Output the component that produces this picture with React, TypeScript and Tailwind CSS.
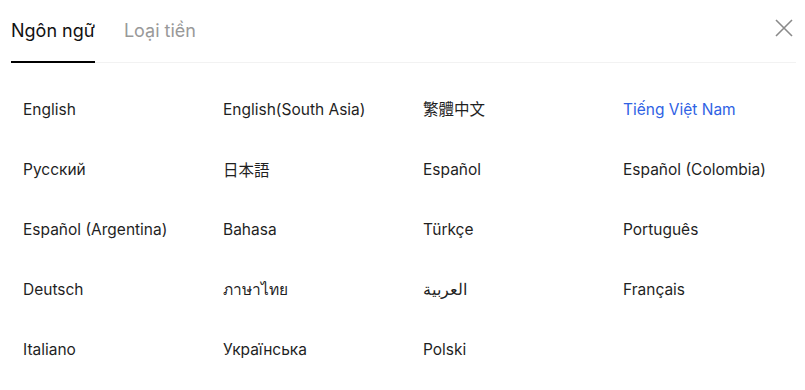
import React, { useState } from 'react';

const languages = [
  'English',
  'English(South Asia)',
  '繁體中文',
  'Tiếng Việt Nam',
  'Русский',
  '日本語',
  'Español',
  'Español (Colombia)',
  'Español (Argentina)',
  'Bahasa',
  'Türkçe',
  'Português',
  'Deutsch',
  'ภาษาไทย',
  'العربية',
  'Français',
  'Italiano',
  'Українська',
  'Polski',
];

const App: React.FC = () => {
  const [tab, setTab] = useState<'lang' | 'currency'>('lang');
  const [selected, setSelected] = useState('Tiếng Việt Nam');

  return (
    <div className="w-[805px] h-[390px] bg-white font-['Inter','Noto_Sans_CJK_TC','Noto_Sans',sans-serif] text-[#1f1f1f]">
      {/* Header tabs */}
      <div className="ml-[11px] mr-[9px] h-[63px] flex items-end justify-between border-b border-[#f2f2f2]">
        <div className="flex gap-[29px]">
          <button
            onClick={() => setTab('lang')}
            className={`-mb-px pb-[18px] text-[18px] leading-[24px] border-b-2 ${
              tab === 'lang' ? 'border-black text-[#111]' : 'border-transparent text-[#999]'
            }`}
          >
            Ngôn ngữ
          </button>
          <button
            onClick={() => setTab('currency')}
            className={`-mb-px pb-[18px] text-[18px] leading-[24px] border-b-2 ${
              tab === 'currency' ? 'border-black text-[#111]' : 'border-transparent text-[#999]'
            }`}
          >
            Loại tiền
          </button>
        </div>
        <button className="mb-[24px] mr-[2px] text-[#8a8a8a]">
          <svg width="20" height="20" viewBox="0 0 20 20" fill="none" stroke="currentColor" strokeWidth="1.6">
            <path d="M2 2L18 18M18 2L2 18" />
          </svg>
        </button>
      </div>

      {/* Language grid */}
      <div className="pl-[23px] pt-[17px] grid grid-cols-[200px_200px_200px_200px]">
        {languages.map((lang) => (
          <button
            key={lang}
            onClick={() => setSelected(lang)}
            className={`h-[60px] flex items-center text-left text-[15.5px] ${
              selected === lang ? 'text-[#2f62e4]' : 'text-[#1f1f1f]'
            }`}
          >
            {lang === '日本語' ? (
              <span className="font-['Noto_Sans_CJK_JP',sans-serif]">{lang}</span>
            ) : (
              lang
            )}
          </button>
        ))}
      </div>
    </div>
  );
};

export default App;
